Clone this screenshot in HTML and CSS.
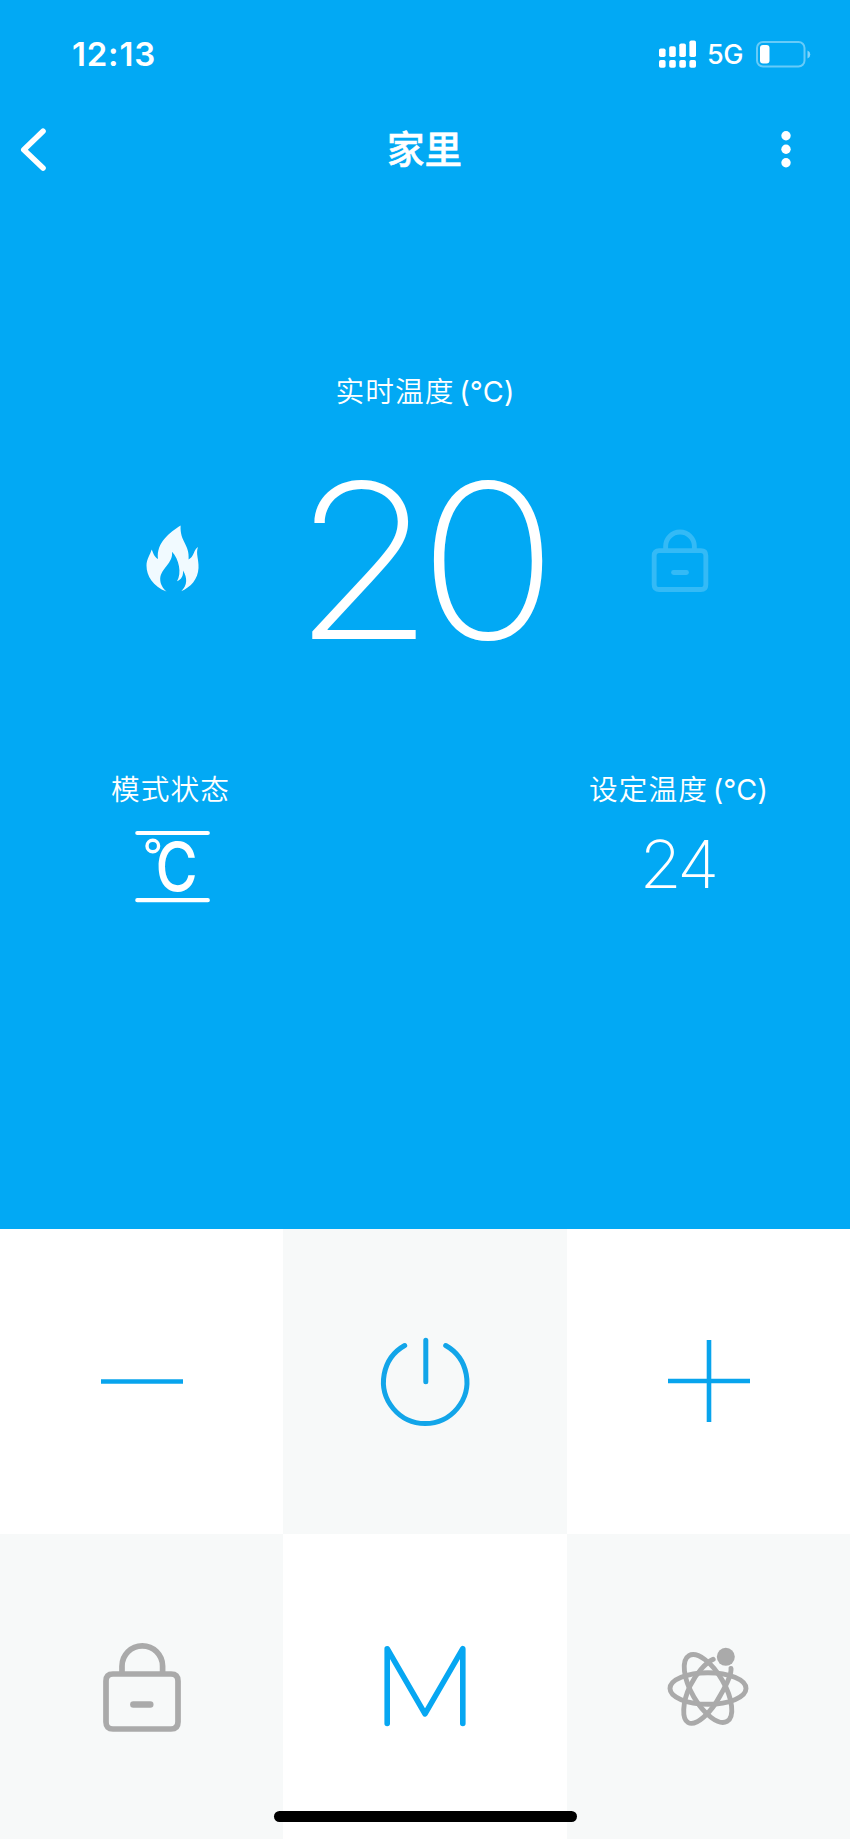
FILE: index.html
```html
<!DOCTYPE html>
<html lang="zh-CN">
<head>
<meta charset="utf-8">
<meta name="viewport" content="width=device-width">
<title>家里</title>
<link rel="stylesheet" href="styles.css">
</head>
<body>
<main class="app">
  <section class="hero">
    <div class="status">
      <span class="time">12:13</span>
      <div class="status-right">
        <svg class="signal" width="38" height="28" viewBox="0 0 38 28" fill="#fff">
          <rect x="0" y="8.5" width="6.6" height="8.5" rx="1.8"/><rect x="10.2" y="6.3" width="6.6" height="10.7" rx="1.8"/><rect x="20.3" y="3.5" width="6.6" height="13.5" rx="1.8"/><rect x="30.4" y="0.5" width="6.6" height="16.5" rx="1.8"/>
          <rect x="0" y="20" width="6.6" height="7.7" rx="1.8"/><rect x="10.2" y="20" width="6.6" height="7.7" rx="1.8"/><rect x="20.3" y="20" width="6.6" height="7.7" rx="1.8"/><rect x="30.4" y="20" width="6.6" height="7.7" rx="1.8"/>
        </svg>
        <span class="network">5G</span>
        <svg class="battery" width="55" height="27" viewBox="0 0 55 27">
          <rect x="1" y="1" width="47.5" height="24.5" rx="6" fill="none" stroke="#fff" stroke-opacity=".4" stroke-width="2"/>
          <rect x="4" y="4" width="9.5" height="18.5" rx="3" fill="#fff"/>
          <path d="M51.5 9.5v8q2.8-1.2 2.8-4t-2.8-4z" fill="#fff" fill-opacity=".5"/>
        </svg>
      </div>
    </div>
    <header class="nav">
      <svg class="back" width="26" height="44" viewBox="0 0 26 44"><path d="M23 3.2 3.800 21.7l19.2 18.3" fill="none" stroke="#fff" stroke-width="5.6" stroke-linecap="round" stroke-linejoin="round"/></svg>
      <h1 class="title">家里</h1>
      <svg class="more" width="10" height="38" viewBox="0 0 10 38" fill="#fff"><circle cx="5" cy="4.7" r="4.7"/><circle cx="5" cy="18.2" r="4.7"/><circle cx="5" cy="31.8" r="4.7"/></svg>
    </header>
    <p class="label current-label">实时温度<span class="unit">(°C)</span></p>
    <div class="current">
      <svg class="flame" width="54" height="67" viewBox="0 0 54 67" fill="#f1faff">
        <path d="M35.6 0.5C34.7 17 45 19.5 43.6 34.5 49 32 48.5 25 53 22 50.5 29 54 34 53.5 43 53 54 46 62 36.3 66.2 42.500 60 42.500 53 38 45.500 38.5 50.500 36.5 54.500 32 56.3 37 48 34 34 27 26.7 28.5 38 16 43 15.2 53.5 15 58.5 17.5 63 21.5 66.5 8 61.5 1.5 51 1.5 40.5 1.5 34 5.3 29.5 6.7 24.5 8.5 29 9.5 32 13 34 11 17.5 25 7.5 35.6 0.5z"/>
      </svg>
      <span class="current-value">20</span>
      <svg class="lock-small" width="56" height="64" viewBox="0 0 78 88" fill="none" stroke="#fff" stroke-opacity=".2" stroke-width="6.8"><path d="M19 28V25a20 20 0 0 1 40 0v3M10 31h58q7 0 7 7v40q0 7-7 7H10q-7 0-7-7V38q0-7 7-7z"/><path d="M30 61.5h18" stroke-linecap="round"/></svg>
    </div>
    <div class="details">
      <div class="detail mode">
        <p class="label">模式状态</p>
        <svg class="celsius" width="76" height="74" viewBox="0 0 76 74">
          <path d="M2.3 3h70.5M2.3 70.2h70.5" stroke="#fff" stroke-width="4.2" stroke-linecap="round"/>
          <circle cx="17.8" cy="16" r="5.8" fill="none" stroke="#fff" stroke-width="3.4"/>
          <text class="celsius-letter" transform="translate(20.4 61) scale(.86 1)">C</text>
        </svg>
      </div>
      <div class="detail target">
        <p class="label">设定温度<span class="unit">(°C)</span></p>
        <span class="target-value">24</span>
      </div>
    </div>
  </section>
  <section class="keys">
    <button class="key" aria-label="降低"><svg width="82" height="82" viewBox="0 0 82 82"><path d="M0 40.500h82" stroke="#08a4ed" stroke-width="4.6"/></svg></button>
    <button class="key shade power" aria-label="电源"><svg width="90" height="90" viewBox="0 0 90 90" fill="none" stroke="#12a5e9" stroke-width="5" stroke-linecap="round"><path d="M24.7 9.5a41.7 41.7 0 1 0 41 0M45.8 4.3v41.5"/></svg></button>
    <button class="key raised" aria-label="升高"><svg width="82" height="82" viewBox="0 0 82 82"><path d="M0 41h82M41 0v82" stroke="#08a4ed" stroke-width="4.6"/></svg></button>
    <button class="key shade" aria-label="童锁"><svg width="78" height="88" viewBox="0 0 78 88" fill="none" stroke="#aaa" stroke-width="5.7"><path d="M19 30V23.200a20.3 20.3 0 0 1 40.6 0V30M10 31h58q7 0 7 7v41q0 7-7 7H10q-7 0-7-7V38q0-7 7-7z"/><path d="M30.3 61.5h17" stroke-width="6.4" stroke-linecap="round"/></svg></button>
    <button class="key raised" aria-label="模式"><svg width="82" height="82" viewBox="0 0 82 82" fill="none" stroke="#07a7f2" stroke-width="5.6" stroke-linecap="round" stroke-linejoin="round"><path d="M3.2 78.5V3.7L41 68.8 78.8 3.7v74.8"/></svg></button>
    <button class="key shade atom" aria-label="场景"><svg width="82" height="82" viewBox="0 0 82 82" fill="none" stroke="#aaa" stroke-width="4.9" stroke-linecap="round"><ellipse cx="41" cy="43.500" rx="38" ry="15.8"/><ellipse cx="41" cy="43.500" rx="38" ry="16.5" transform="rotate(60 41 43.500)"/><path d="M46.2 14.2C38 18 29 29 23 41c-8 17-8 33-2 36.500C29 82 44 68 53.500 50c7-12 11-22 10.500-26.500"/><circle cx="58.800" cy="11.800" r="9" fill="#aaa" stroke="none"/></svg></button>
  </section>
  <div class="home-indicator"></div>
</main>
</body>
</html>
```
FILE: styles.css
```css
* { box-sizing: border-box; }
body { margin: 0; font-family: Inter, "Noto Sans CJK SC", sans-serif; }
p, h1 { margin: 0; }
svg { overflow: visible; }
.app { width: 850px; height: 1839px; position: relative; overflow: hidden; background: #fff; }
.hero { height: 1229px; background: #02a9f4; color: #fff; }
.status { height: 108px; padding: 0 39px 0 72px; display: flex; justify-content: space-between; align-items: center; }
.time { font-size: 33px; font-weight: 600; line-height: 40px; letter-spacing: .8px; }
.status-right { display: flex; align-items: center; }
.network { margin: 2px 13px 0 10px; font-size: 27px; font-weight: 450; line-height: 32px; letter-spacing: -.4px; }
.nav { height: 84px; padding: 0 59px 0 20px; display: grid; grid-template-columns: 26px 1fr 10px; align-items: center; }
.title { padding-left: 22px; text-align: center; font-size: 37.5px; line-height: 50px; font-weight: 500; -webkit-text-stroke: .5px #fff; }
.label { font-size: 28.7px; line-height: 40px; font-weight: 350; letter-spacing: 1.1px; white-space: nowrap; }
.unit { margin-left: 4.5px; font-weight: 400; letter-spacing: .1px; }
.current-label { padding-top: 180px; text-align: center; }
.current { margin-top: 39px; height: 220px; padding: 0 142px 0 145px; display: flex; justify-content: space-between; align-items: center; }
.flame { margin-bottom: 5px; }
.lock-small { margin-bottom: 3px; }
.current-value { margin-right: 17px; font-size: 215px; line-height: 220px; font-weight: 180; letter-spacing: -15.5px; transform: scaleX(1.075); }
.details { margin-top: 99px; padding: 0 82px 0 111px; display: flex; justify-content: space-between; }
.detail { display: flex; flex-direction: column; align-items: center; }
.celsius { margin: 20px 0 0 5px; }
.celsius-letter { font-size: 67px; font-weight: 480; fill: #fff; }
.target-value { margin: 14px 2px 0 0; font-size: 66px; line-height: 80px; font-weight: 180; letter-spacing: -3.5px; transform: scaleX(1.04); }
.keys { display: grid; grid-template-columns: 283px 284px 283px; grid-template-rows: 305px 305px; }
.key { display: flex; align-items: center; justify-content: center; padding: 0; border: 0; background: #fff; }
.shade { background: #f7f9f9; }
.power { padding-bottom: 2px; }
.raised { padding-bottom: 1px; }
.atom { padding: 0 2px 2px 0; }
.home-indicator { position: absolute; left: 274px; bottom: 17px; width: 303px; height: 11px; border-radius: 6px; background: #000; }
```
